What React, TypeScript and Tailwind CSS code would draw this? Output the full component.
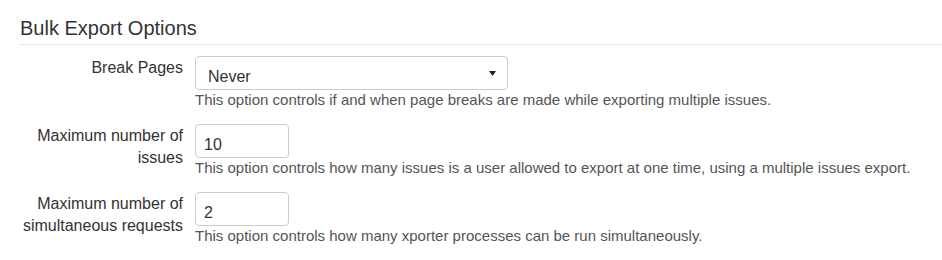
import React from 'react';

type Row = {
  label: string;
  help: string;
  kind: 'select' | 'input';
  value: string;
};

const rows: Row[] = [
  {
    label: 'Break Pages',
    help: 'This option controls if and when page breaks are made while exporting multiple issues.',
    kind: 'select',
    value: 'Never',
  },
  {
    label: 'Maximum number of issues',
    help: 'This option controls how many issues is a user allowed to export at one time, using a multiple issues export.',
    kind: 'input',
    value: '10',
  },
  {
    label: 'Maximum number of simultaneous requests',
    help: 'This option controls how many xporter processes can be run simultaneously.',
    kind: 'input',
    value: '2',
  },
];

function Control({ row }: { row: Row }) {
  if (row.kind === 'select') {
    return (
      <div className="flex h-[34px] w-[313px] items-center justify-between rounded-[4px] border border-[#ccc] bg-white pl-3 pr-[11px] text-[16px] text-[#333]">
        <span className="pt-[7px]">{row.value}</span>
        {/* dropdown caret */}
        <svg width="7" height="5" viewBox="0 0 7 5" className="mt-px">
          <path d="M0 0h7L3.5 5z" fill="#222" />
        </svg>
      </div>
    );
  }
  return (
    <input
      type="text"
      defaultValue={row.value}
      className="h-[34px] w-[94px] rounded-[4px] border border-[#ccc] bg-white px-2 pt-[7px] text-[16px] text-[#333] outline-none"
    />
  );
}

export default function App() {
  return (
    <div
      className="bg-white pl-5 pt-[17px] text-[#333]"
      style={{ fontFamily: '"Liberation Sans", Arial, sans-serif' }}
    >
      <h3 className="border-b border-[#e5e5e5] pb-[5px] text-[20px] leading-[22px]">
        Bulk Export Options
      </h3>
      <div className="mt-[11px] flex flex-col gap-[14px]">
        {rows.map((row) => (
          <div key={row.label} className="flex gap-3">
            <label className="w-[163px] shrink-0 pt-px text-right text-[16px] leading-[22px]">
              {row.label}
            </label>
            <div className="flex flex-col">
              <Control row={row} />
              <p className="whitespace-nowrap text-[15px] leading-[20px] text-[#555]">{row.help}</p>
            </div>
          </div>
        ))}
      </div>
    </div>
  );
}
